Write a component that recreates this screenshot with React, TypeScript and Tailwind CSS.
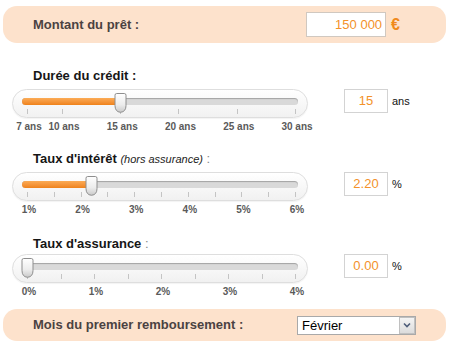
import React from 'react';

type Slider = {
  title: React.ReactNode;
  min: number;
  max: number;
  value: number;
  display: string;
  unit: string;
  ticks: number[];
  labels: { v: number; text: string }[];
  titleTop: string;
  sliderTop: string;
};

// scale runs from x=27 to x=295 of the page
const X0 = 27;
const W = 268;

const Thumb = () => (
  <svg width="13" height="20" viewBox="0 0 13 20">
    <defs>
      <linearGradient id="thumbG" x1="0" y1="0" x2="0" y2="1">
        <stop offset="0" stopColor="#ffffff" />
        <stop offset="0.6" stopColor="#ececec" />
        <stop offset="1" stopColor="#c9c9c9" />
      </linearGradient>
    </defs>
    <path
      d="M1 2.2 Q1 0.5 2.7 0.5 H10.3 Q12 0.5 12 2.2 V12.5 Q12 18.8 6.5 19.3 Q1 18.8 1 12.5 Z"
      fill="url(#thumbG)"
      stroke="#8e8e8e"
      strokeWidth="1"
    />
  </svg>
);

const SliderRow = ({ s }: { s: Slider }) => {
  const pos = (v: number) => X0 + ((v - s.min) / (s.max - s.min)) * W;
  const thumbX = pos(s.value);
  return (
    <div>
      <div className={`pl-[33px] h-[16px] leading-[16px] text-[13px] font-bold text-[#161616] ${s.titleTop}`}>
        {s.title}
      </div>
      <div className={`flex items-start ${s.sliderTop}`}>
        <div className="ml-[12px] w-[296px]">
          <div className="relative h-[29px] rounded-full border border-[#dedede] bg-gradient-to-b from-[#ffffff] to-[#f1f1f1] shadow-[0_1px_1px_rgba(0,0,0,0.05)]">
            <div className="mx-[9px] mt-[8px] h-[7px] rounded-full bg-[#d9d9d9] shadow-[inset_0_1px_1px_rgba(0,0,0,0.25)] overflow-hidden">
              <div
                className="h-full bg-gradient-to-b from-[#fbab55] to-[#ef8218]"
                style={{ width: Math.max(0, thumbX - 22) }}
              />
            </div>
            {s.ticks.map((t) => (
              <div
                key={t}
                className="absolute top-[19px] w-px h-[5px] bg-[#c4c4c4]"
                style={{ left: pos(t) - 13 }}
              />
            ))}
            <div className="absolute top-[3px]" style={{ left: thumbX - 13 - 6.5 }}>
              <Thumb />
            </div>
          </div>
          <div className="relative h-[12px] mt-[3px]">
            {s.labels.map((l) => (
              <div
                key={l.v}
                className="absolute top-0 -translate-x-1/2 whitespace-nowrap text-[10px] leading-[12px] font-bold text-[#5a5a5a]"
                style={{ left: pos(l.v) - 10 }}
              >
                {l.text}
              </div>
            ))}
          </div>
        </div>
        <div className="ml-[36px] w-[44px] h-[24px] border border-[#d3d3d3] bg-white flex items-center justify-center text-[13px] text-[#f3922a]">
          {s.display}
        </div>
        <div className="ml-[4px] h-[24px] flex items-center text-[11px] text-[#111]">{s.unit}</div>
      </div>
    </div>
  );
};

const half = (a: number, b: number) => {
  const r: number[] = [];
  for (let v = a; v <= b + 1e-9; v += 0.5) r.push(v);
  return r;
};

const sliders: Slider[] = [
  {
    title: <>Durée du crédit :</>,
    min: 7,
    max: 30,
    value: 15,
    display: '15',
    unit: 'ans',
    ticks: [7, 10, 15, 20, 25, 30],
    labels: [7, 10, 15, 20, 25, 30].map((v) => ({ v, text: `${v} ans` })),
    titleTop: 'mt-[25px]',
    sliderTop: 'mt-[5px]',
  },
  {
    title: (
      <>
        Taux d'intérêt <span className="font-normal italic text-[11px] text-[#222]">(hors assurance)</span>{' '}
        <span className="font-normal text-[#888]">:</span>
      </>
    ),
    min: 1,
    max: 6,
    value: 2.2,
    display: '2.20',
    unit: '%',
    ticks: half(1, 6),
    labels: [1, 2, 3, 4, 5, 6].map((v) => ({ v, text: `${v}%` })),
    titleTop: 'mt-[18px]',
    sliderTop: 'mt-[5px]',
  },
  {
    title: (
      <>
        Taux d'assurance <span className="font-normal text-[#888]">:</span>
      </>
    ),
    min: 0,
    max: 4,
    value: 0,
    display: '0.00',
    unit: '%',
    ticks: half(0, 4),
    labels: [0, 1, 2, 3, 4].map((v) => ({ v, text: `${v}%` })),
    titleTop: 'mt-[20px]',
    sliderTop: 'mt-[2px]',
  },
];

export default function App() {
  return (
    <div className="w-[449px] h-[348px] bg-white pt-[6px] font-['Liberation_Sans',Arial,sans-serif]">
      <div className="mx-[3px] h-[37px] rounded-[14px] bg-[#fde2cc] flex items-center pl-[30px]">
        <div className="flex-1 text-[13px] font-bold text-[#4b4242]">Montant du prêt :</div>
        <div className="w-[80px] h-[25px] border border-[#d0c8c0] bg-white flex items-center justify-end pr-[3px] text-[13px] text-[#f3922a]">
          150 000
        </div>
        <div className="ml-[5px] mr-[46px] text-[16px] font-bold text-[#f08a1c]">€</div>
      </div>

      {sliders.map((s, i) => (
        <SliderRow key={i} s={s} />
      ))}

      <div className="mt-[11px] mx-[3px] h-[32px] rounded-[14px] bg-[#fde2cc] flex items-center pl-[30px]">
        <div className="flex-1 text-[13px] font-bold text-[#4b4242]">Mois du premier remboursement :</div>
        <div className="mr-[30px] w-[119px] h-[19px] border border-[#a9a9a9] bg-white flex items-center">
          <div className="flex-1 pl-[4px] text-[13px] leading-[17px] text-black">Février</div>
          <div className="w-[16px] h-[17px] border border-[#c0c0c0] bg-gradient-to-b from-[#f4f4f4] to-[#dcdcdc] flex items-center justify-center">
            <svg width="8" height="6" viewBox="0 0 8 6">
              <path d="M1 1.5 L4 4.5 L7 1.5" fill="none" stroke="#4e5d7a" strokeWidth="1.6" />
            </svg>
          </div>
        </div>
      </div>
    </div>
  );
}
